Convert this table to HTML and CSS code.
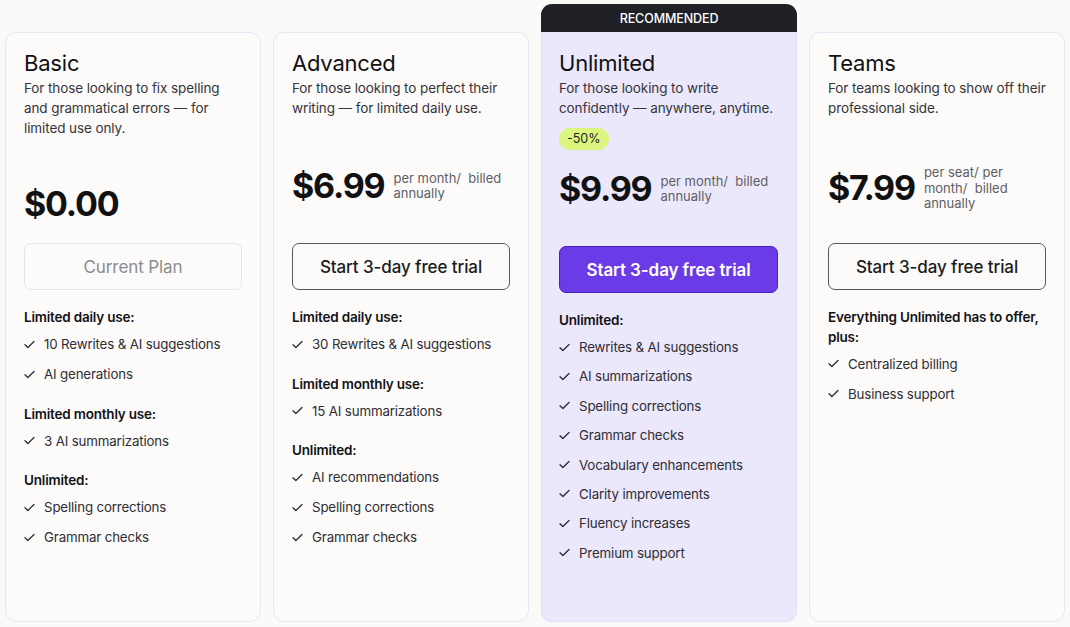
FILE: index.html
```html
<!DOCTYPE html>
<html lang="en">
<head>
<meta charset="utf-8">
<title>Pricing</title>
<link rel="stylesheet" href="styles.css">
</head>
<body>
<main class="pricing">
  <section class="card">
    <div class="top">
      <h2 class="title">Basic</h2>
      <p class="desc">For those looking to fix spelling and grammatical errors — for limited use only.</p>
      <div class="price price-low"><span class="amount">$0.00</span></div>
    </div>
    <button class="btn btn-current">Current Plan</button>
    <div class="features">
      <div class="group">
        <h3>Limited daily use:</h3>
        <ul>
          <li><svg class="chk" viewBox="0 0 12 10"><path d="M1 5.2l3.2 3.2L11 1.6"/></svg>10 Rewrites &amp; AI suggestions</li>
          <li><svg class="chk" viewBox="0 0 12 10"><path d="M1 5.2l3.2 3.2L11 1.6"/></svg>AI generations</li>
        </ul>
      </div>
      <div class="group">
        <h3>Limited monthly use:</h3>
        <ul>
          <li><svg class="chk" viewBox="0 0 12 10"><path d="M1 5.2l3.2 3.2L11 1.6"/></svg>3 AI summarizations</li>
        </ul>
      </div>
      <div class="group">
        <h3>Unlimited:</h3>
        <ul>
          <li><svg class="chk" viewBox="0 0 12 10"><path d="M1 5.2l3.2 3.2L11 1.6"/></svg>Spelling corrections</li>
          <li><svg class="chk" viewBox="0 0 12 10"><path d="M1 5.2l3.2 3.2L11 1.6"/></svg>Grammar checks</li>
        </ul>
      </div>
    </div>
  </section>

  <section class="card">
    <div class="top">
      <h2 class="title">Advanced</h2>
      <p class="desc">For those looking to perfect their writing — for limited daily use.</p>
      <div class="price"><span class="amount">$6.99</span><span class="note">per month/&nbsp; billed annually</span></div>
    </div>
    <button class="btn">Start 3-day free trial</button>
    <div class="features">
      <div class="group">
        <h3>Limited daily use:</h3>
        <ul>
          <li><svg class="chk" viewBox="0 0 12 10"><path d="M1 5.2l3.2 3.2L11 1.6"/></svg>30 Rewrites &amp; AI suggestions</li>
        </ul>
      </div>
      <div class="group">
        <h3>Limited monthly use:</h3>
        <ul>
          <li><svg class="chk" viewBox="0 0 12 10"><path d="M1 5.2l3.2 3.2L11 1.6"/></svg>15 AI summarizations</li>
        </ul>
      </div>
      <div class="group">
        <h3>Unlimited:</h3>
        <ul>
          <li><svg class="chk" viewBox="0 0 12 10"><path d="M1 5.2l3.2 3.2L11 1.6"/></svg>AI recommendations</li>
          <li><svg class="chk" viewBox="0 0 12 10"><path d="M1 5.2l3.2 3.2L11 1.6"/></svg>Spelling corrections</li>
          <li><svg class="chk" viewBox="0 0 12 10"><path d="M1 5.2l3.2 3.2L11 1.6"/></svg>Grammar checks</li>
        </ul>
      </div>
    </div>
  </section>

  <section class="card-wrap">
    <div class="ribbon">RECOMMENDED</div>
    <div class="card featured">
      <div class="top">
        <h2 class="title">Unlimited</h2>
        <p class="desc">For those looking to write confidently — anywhere, anytime.</p>
        <span class="discount">-50%</span>
        <div class="price price-badge"><span class="amount">$9.99</span><span class="note">per month/&nbsp; billed annually</span></div>
      </div>
      <button class="btn btn-primary">Start 3-day free trial</button>
      <div class="features">
        <div class="group">
          <h3>Unlimited:</h3>
          <ul>
            <li><svg class="chk" viewBox="0 0 12 10"><path d="M1 5.2l3.2 3.2L11 1.6"/></svg>Rewrites &amp; AI suggestions</li>
            <li><svg class="chk" viewBox="0 0 12 10"><path d="M1 5.2l3.2 3.2L11 1.6"/></svg>AI summarizations</li>
            <li><svg class="chk" viewBox="0 0 12 10"><path d="M1 5.2l3.2 3.2L11 1.6"/></svg>Spelling corrections</li>
            <li><svg class="chk" viewBox="0 0 12 10"><path d="M1 5.2l3.2 3.2L11 1.6"/></svg>Grammar checks</li>
            <li><svg class="chk" viewBox="0 0 12 10"><path d="M1 5.2l3.2 3.2L11 1.6"/></svg>Vocabulary enhancements</li>
            <li><svg class="chk" viewBox="0 0 12 10"><path d="M1 5.2l3.2 3.2L11 1.6"/></svg>Clarity improvements</li>
            <li><svg class="chk" viewBox="0 0 12 10"><path d="M1 5.2l3.2 3.2L11 1.6"/></svg>Fluency increases</li>
            <li><svg class="chk" viewBox="0 0 12 10"><path d="M1 5.2l3.2 3.2L11 1.6"/></svg>Premium support</li>
          </ul>
        </div>
      </div>
    </div>
  </section>

  <section class="card">
    <div class="top">
      <h2 class="title">Teams</h2>
      <p class="desc">For teams looking to show off their professional side.</p>
      <div class="price"><span class="amount">$7.99</span><span class="note">per seat/ per month/&nbsp; billed annually</span></div>
    </div>
    <button class="btn">Start 3-day free trial</button>
    <div class="features">
      <div class="group">
        <h3>Everything Unlimited has to offer, plus:</h3>
        <ul>
          <li><svg class="chk" viewBox="0 0 12 10"><path d="M1 5.2l3.2 3.2L11 1.6"/></svg>Centralized billing</li>
          <li><svg class="chk" viewBox="0 0 12 10"><path d="M1 5.2l3.2 3.2L11 1.6"/></svg>Business support</li>
        </ul>
      </div>
    </div>
  </section>
</main>
</body>
</html>
```

FILE: styles.css
```css
* { box-sizing: border-box; }

html, body {
  margin: 0;
  padding: 0;
  background: #fbfaf8;
}

body {
  font-family: Inter, "Noto Sans", "Liberation Sans", sans-serif;
  color: #1b1b20;
  width: 1070px;
  height: 627px;
  overflow: hidden;
}

.pricing {
  display: flex;
  gap: 12px;
  height: 627px;
  padding: 4px 5px 5px;
}

.card, .card-wrap {
  flex: 0 0 256px;
}

.card {
  margin-top: 28px;
  background: #fcfbfa;
  border: 1px solid #e8e6f3;
  border-radius: 11px;
  padding: 16px 18px 18px;
  display: flex;
  flex-direction: column;
}

.card-wrap {
  display: flex;
  flex-direction: column;
}

.ribbon {
  height: 28px;
  background: #202126;
  color: #fff;
  border-radius: 11px 11px 0 0;
  font-size: 12.5px;
  font-weight: 500;
  letter-spacing: -0.1px;
  display: flex;
  align-items: center;
  justify-content: center;
}

.card.featured {
  margin-top: 0;
  flex: 1;
  background: #ebe8fc;
  border: 1px solid #e2def6;
  border-top: 0;
  border-radius: 0 0 11px 11px;
  padding: 17px 18px 18px 17px;
}

.top {
  height: 194px;
  display: flex;
  flex-direction: column;
}

.featured .top { height: 197px; }

.title {
  margin: 0;
  font-size: 22px;
  font-weight: 400;
  line-height: 28px;
  letter-spacing: -0.2px;
  color: #111114;
}

.desc {
  margin: 1px 0 0;
  font-size: 13.5px;
  line-height: 20px;
  color: #35353b;
  letter-spacing: -0.1px;
}

.discount {
  align-self: flex-start;
  margin-top: 10px;
  height: 22px;
  padding: 0 8px;
  border-radius: 11px;
  background: #dcf57e;
  font-size: 12.5px;
  line-height: 22px;
  color: #1b1b20;
}

.price {
  margin-top: 47px;
  display: flex;
  align-items: center;
  gap: 9px;
}

.price-low { margin-top: 45px; }

.price-badge { margin-top: 18px; }

.amount {
  font-size: 34px;
  line-height: 42px;
  font-weight: 700;
  letter-spacing: -1.2px;
  color: #111114;
}

.note {
  font-size: 13px;
  line-height: 15.5px;
  color: #5f5f66;
  max-width: 112px;
}

.btn {
  display: block;
  width: 100%;
  height: 47px;
  flex: 0 0 47px;
  border: 1px solid #58585e;
  border-radius: 7px;
  background: transparent;
  font-family: inherit;
  font-size: 17px;
  font-weight: 500;
  color: #1b1b20;
  letter-spacing: -0.1px;
  padding: 0;
  cursor: pointer;
}

.btn-current {
  border-color: #e6e5e4;
  color: #8b8c90;
  font-weight: 400;
}

.btn-primary {
  background: #6b3be8;
  border-color: #4a22b8;
  color: #fff;
  font-weight: 600;
}

.features {
  margin-top: 18px;
  display: flex;
  flex-direction: column;
  gap: 20.5px;
}

.group h3 {
  margin: 0;
  font-size: 13.5px;
  line-height: 19.5px;
  font-weight: 600;
  letter-spacing: -0.2px;
  color: #121216;
}

.group ul {
  list-style: none;
  margin: 6.5px 0 0;
  padding: 0;
  display: flex;
  flex-direction: column;
  gap: 10px;
}

.featured .group ul { gap: 9.4px; }

.group li {
  display: flex;
  align-items: center;
  font-size: 13.3px;
  line-height: 20px;
  color: #2e2e34;
  letter-spacing: -0.15px;
}

.chk {
  width: 11px;
  height: 9px;
  margin: 0 9px 0 0;
  flex: 0 0 auto;
  fill: none;
  stroke: #2a2a30;
  stroke-width: 1.4;
  stroke-linecap: round;
  stroke-linejoin: round;
}
```
